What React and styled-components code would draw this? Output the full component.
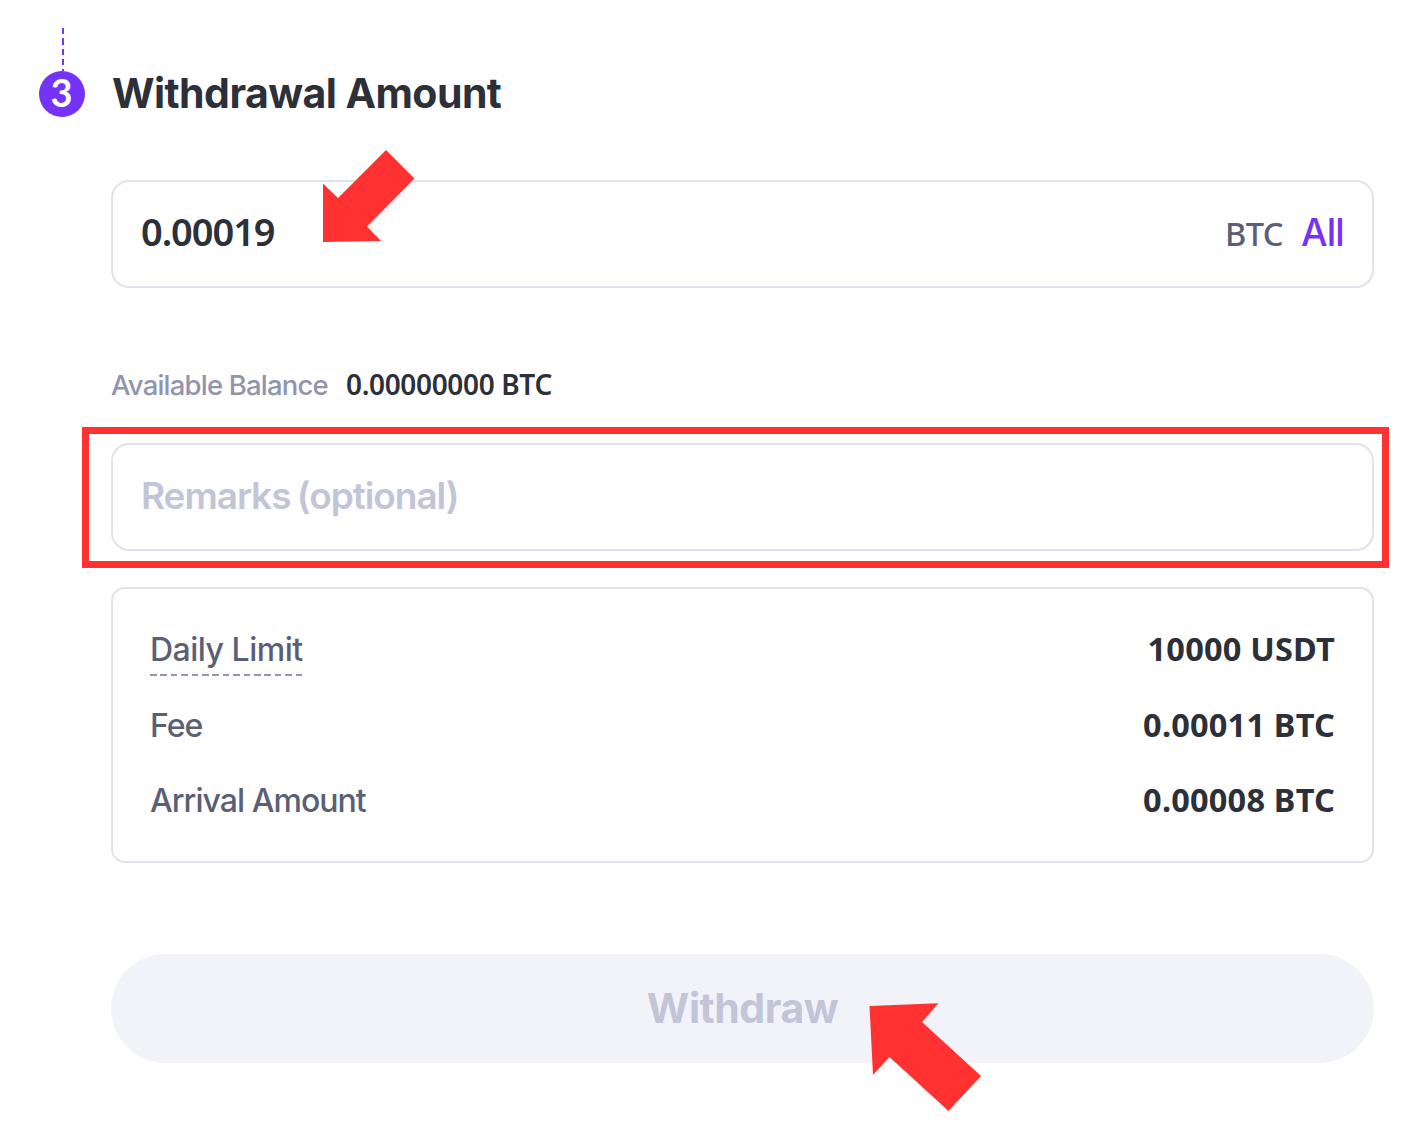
import React, { useState } from 'react'
import styled, { createGlobalStyle } from "styled-components";

const GlobalStyle = createGlobalStyle`
  * {
    box-sizing: border-box;
  }
  body {
    margin: 0;
    background-color: #fff;
    font-family: 'Inter', sans-serif;
    color: #2d2f39;
  }
`;

const Container = styled.div`
  width: 1418px;
  height: 1138px;
  padding: 28px 44px 0 39px;
  overflow: hidden;
`;

const Connector = styled.div`
  width: 2px;
  height: 43px;
  margin-left: 22.5px;
  background: repeating-linear-gradient(#7433f7 0 6.5px, transparent 6.5px 10.3px);
`;

const Header = styled.div`
  display: flex;
  align-items: center;
  gap: 27px;
  height: 46px;
`;

const Step = styled.div`
  width: 46px;
  height: 46px;
  padding-right: 1px;
  border-radius: 50%;
  background-color: #7433f7;
  color: white;
  font-family: 'Lato', sans-serif;
  font-size: 38px;
  font-weight: 700;
  line-height: 43px;
  text-align: center;
`;

const Title = styled.h1`
  margin: 0;
  padding-bottom: 2px;
  font-size: 41px;
  font-weight: 700;
  line-height: 44px;
  letter-spacing: -0.55px;
`;

const Content = styled.div`
  display: flex;
  flex-direction: column;
  margin: 63px 0 0 72px;
`;

const Field = styled.div`
  position: relative;
  display: flex;
  align-items: center;
  height: 108px;
  padding: 0 28px;
  border: 2px solid #e1e3ec;
  border-radius: 18px;
`;

const Input = styled.input`
  flex: 1;
  min-width: 0;
  padding: 0 0 ${props => props.$number ? '6px' : '4px'};
  border: none;
  outline: none;
  background: transparent;
  color: #2d2f39;
  font-family: ${props => props.$number ? "'Noto Sans'" : "'Inter'"}, sans-serif;
  font-size: 38px;
  font-weight: 600;
  letter-spacing: ${props => props.$number ? '-1.05px' : '-1.2px'};
  &::placeholder {
    color: #c2c5d8;
    font-size: 37px;
    font-weight: 600;
    letter-spacing: -1.05px;
    word-spacing: -2px;
    opacity: 1;
  }
`;

const Unit = styled.span`
  padding-bottom: 2px;
  color: #5b5f75;
  font-family: 'Noto Sans', sans-serif;
  font-size: 32.5px;
  font-weight: 550;
  letter-spacing: -0.5px;
`;

const All = styled.button`
  margin-left: 18px;
  padding: 0 0 4px;
  border: none;
  background: none;
  color: #7433f7;
  font-family: 'Inter', sans-serif;
  font-size: 37.5px;
  font-weight: 550;
  letter-spacing: -0.8px;
  cursor: pointer;
`;

const Balance = styled.div`
  display: flex;
  align-items: center;
  gap: 18px;
  height: 40px;
  margin: 77px 0 38px;
`;

const BalanceLabel = styled.span`
  color: #9194ab;
  font-size: 27.5px;
  font-weight: 450;
  letter-spacing: -0.8px;
`;

const BalanceValue = styled.span`
  padding-bottom: 3px;
  font-family: 'Noto Sans', sans-serif;
  font-size: 28px;
  font-weight: 600;
  letter-spacing: -0.35px;
`;

const Highlight = styled.div`
  position: absolute;
  top: -18px;
  left: -31px;
  width: 1307px;
  height: 141px;
  border: 7px solid #ff3131;
  pointer-events: none;
`;

const Details = styled.div`
  display: flex;
  flex-direction: column;
  gap: 30px;
  height: 276px;
  margin-top: 36px;
  padding: 38px 37px;
  border: 2px solid #e1e3ec;
  border-radius: 14px;
`;

const Row = styled.div`
  display: flex;
  align-items: flex-start;
  justify-content: space-between;
  height: 45.5px;
  line-height: 45px;
`;

const Label = styled.span`
  color: #5b5f75;
  font-size: 32px;
  font-weight: 450;
  letter-spacing: -0.95px;
`;

const DashLabel = styled(Label)`
  height: 49px;
  background: repeating-linear-gradient(90deg, #9396ae 0 6.5px, transparent 6.5px 10.4px) left bottom / 100% 2px no-repeat;
  letter-spacing: -0.5px;
`;

const Value = styled.span`
  line-height: 43px;
  font-family: 'Noto Sans', sans-serif;
  font-size: 32.5px;
  font-weight: 700;
  letter-spacing: 0.2px;
`;

const Button = styled.button`
  position: relative;
  height: 109px;
  margin-top: 91px;
  padding: 0 0 2px;
  border: none;
  border-radius: 55px;
  background-color: #f2f3f8;
  color: #c2c5d8;
  font-family: 'Inter', sans-serif;
  font-size: 41px;
  font-weight: 700;
  letter-spacing: -0.45px;
`;

const Arrow = styled.svg`
  position: absolute;
  top: ${props => props.$top}px;
  left: ${props => props.$left}px;
  fill: #ff3131;
  pointer-events: none;
`;

const details = [
  { label: 'Daily Limit', value: '10000 USDT', hint: true },
  { label: 'Fee', value: '0.00011 BTC' },
  { label: 'Arrival Amount', value: '0.00008 BTC' },
]

export default function App() {
  const [amount, setAmount] = useState('0.00019');
  const [remarks, setRemarks] = useState('');

  return (
    <Container>
      <GlobalStyle />
      <Connector />
      <Header>
        <Step>3</Step>
        <Title>Withdrawal Amount</Title>
      </Header>
      <Content>
        <Field>
          <Input $number value={amount} onChange={(e) => setAmount(e.target.value)} />
          <Unit>BTC</Unit>
          <All>All</All>
          <Arrow $top={-32} $left={210} width="92" height="92" viewBox="0 0 92 92">
            <path d="M0 92V33.5L15 48L63 0L91.5 28.5L44 76.5L58 91Z" />
          </Arrow>
        </Field>
        <Balance>
          <BalanceLabel>Available Balance</BalanceLabel>
          <BalanceValue>0.00000000 BTC</BalanceValue>
        </Balance>
        <Field>
          <Input placeholder="Remarks (optional)" value={remarks} onChange={(e) => setRemarks(e.target.value)} />
          <Highlight />
        </Field>
        <Details>
          {details.map((item) => (
            <Row key={item.label}>
              {item.hint ? <DashLabel>{item.label}</DashLabel> : <Label>{item.label}</Label>}
              <Value>{item.value}</Value>
            </Row>
          ))}
        </Details>
        <Button>
          Withdraw
          <Arrow $top={49} $left={758} width="112" height="108" viewBox="0 0 112 108">
            <path d="M0.5 3L69.5 0.3L53 19L112 73L79.5 108L20.5 54L4 72Z" />
          </Arrow>
        </Button>
      </Content>
    </Container>
  )
}
